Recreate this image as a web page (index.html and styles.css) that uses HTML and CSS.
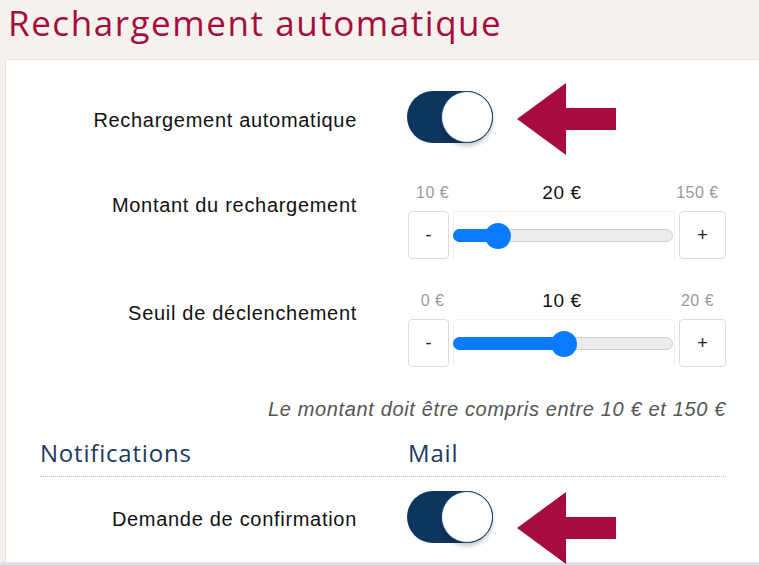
FILE: index.html
```html
<!DOCTYPE html>
<html lang="fr">
<head>
<meta charset="utf-8">
<title>Rechargement automatique</title>
<link rel="stylesheet" href="styles.css">
</head>
<body>
<h1 class="page-title">Rechargement automatique</h1>
<section class="card">
  <div class="row row-toggle">
    <div class="label">Rechargement automatique</div>
    <div class="control">
      <div class="toggle"><span class="knob"></span></div>
      <svg class="arrow" width="100" height="72" viewBox="0 0 100 72" aria-hidden="true"><polygon points="0,36 49,0 49,25 99,25 99,47 49,47 49,72" /></svg>
    </div>
  </div>

  <div class="row row-slider">
    <div class="label label-slider">Montant du rechargement</div>
    <div class="slider">
      <div class="bounds"><span>10 €</span><span class="value">20 €</span><span>150 €</span></div>
      <div class="slider-controls">
        <button class="step">-</button>
        <div class="range"><div class="track"><div class="fill" style="width:44px"></div><div class="thumb" style="left:44px"></div></div></div>
        <button class="step">+</button>
      </div>
    </div>
  </div>

  <div class="row row-slider row-slider-2">
    <div class="label label-slider">Seuil de déclenchement</div>
    <div class="slider">
      <div class="bounds"><span>0 €</span><span class="value">10 €</span><span>20 €</span></div>
      <div class="slider-controls">
        <button class="step">-</button>
        <div class="range"><div class="track"><div class="fill" style="width:110px"></div><div class="thumb" style="left:110px"></div></div></div>
        <button class="step">+</button>
      </div>
    </div>
  </div>

  <p class="note">Le montant doit être compris entre 10 € et 150 €</p>

  <div class="row notif-head">
    <div class="head-title">Notifications</div>
    <div class="head-title">Mail</div>
  </div>

  <div class="row row-toggle row-last">
    <div class="label">Demande de confirmation</div>
    <div class="control">
      <div class="toggle"><span class="knob"></span></div>
      <svg class="arrow arrow-low" width="100" height="72" viewBox="0 0 100 72" aria-hidden="true"><polygon points="0,36 49,0 49,25 99,25 99,47 49,47 49,72" /></svg>
    </div>
  </div>
</section>
<div class="bottom-band"></div>
</body>
</html>
```

FILE: styles.css
```css
* { box-sizing: border-box; }

html, body {
  margin: 0;
  padding: 0;
  overflow: hidden;
}

body {
  background: #f5f2ed;
  font-family: "Liberation Sans", Arial, sans-serif;
  color: #111;
  width: 759px;
  height: 565px;
}

.page-title {
  margin: 0;
  height: 59px;
  padding: 0 0 0 8px;
  font-family: "Open Sans", Lato, sans-serif;
  font-weight: 400;
  font-size: 35px;
  line-height: 46px;
  color: #a60d3e;
  letter-spacing: 1.55px;
  white-space: nowrap;
}

.card {
  margin-left: 5px;
  width: 760px;
  height: 503px;
  background: #fff;
  border-top: 1px solid #e8e6e2;
  border-left: 1px solid #e6e4e0;
  padding: 31px 0 0 34px;
}

.row {
  display: grid;
  grid-template-columns: 317px 318px;
  column-gap: 51px;
}

.label {
  text-align: right;
  font-size: 20px;
  line-height: 24px;
  letter-spacing: 0.7px;
  color: #111;
}

.row-toggle { align-items: center; }
.row-toggle .label { padding-top: 5px; }

.control {
  display: flex;
  align-items: center;
  margin-left: -1px;
}

.toggle {
  width: 86px;
  height: 52px;
  border-radius: 26px;
  background: #0d365f;
  display: flex;
  justify-content: flex-end;
}

.knob {
  width: 52px;
  height: 52px;
  border-radius: 50%;
  background: #fff;
  border: 1px solid #1b4670;
  box-shadow: 0 3px 4px rgba(0, 0, 0, 0.22);
}

.arrow {
  margin: -8px 0 -12px 24px;
  fill: #a80c3e;
}

.arrow-low { margin: 1px 0 -21px 24px; }

.row-slider { margin-top: 40px; }
.row-slider-2 { margin-top: 32px; }

.label-slider { padding-top: 10px; }

.bounds,
.slider-controls {
  display: grid;
  grid-template-columns: 41px 1fr 47px;
  column-gap: 4px;
}

.bounds {
  height: 20px;
  line-height: 20px;
  margin-bottom: 8px;
  text-align: center;
  font-size: 16px;
  letter-spacing: 0.5px;
  color: #9a9a9a;
}

.bounds span:first-child { margin-left: 8px; white-space: nowrap; }
.bounds span:last-child { margin-left: -10px; white-space: nowrap; }

.bounds .value {
  font-size: 19px;
  color: #111;
  letter-spacing: 0.6px;
  margin-left: -4px;
}

.step {
  height: 48px;
  margin: 0;
  padding: 0;
  background: #fff;
  border: 1px solid #dcdcdc;
  border-radius: 4px;
  font-family: "Liberation Sans", Arial, sans-serif;
  font-size: 18px;
  color: #222;
}

.range {
  height: 48px;
  border: 1px solid #f1f1f1;
  border-bottom: none;
  border-radius: 4px 4px 0 0;
  display: flex;
  align-items: center;
}

.track {
  position: relative;
  width: 100%;
  height: 13px;
  margin: 0 -1px;
  background: #ececec;
  border: 1px solid #cfcfcf;
  border-radius: 7px;
}

.fill {
  height: 13px;
  margin: -1px 0 0 -1px;
  background: #0a7bff;
  border-radius: 7px 0 0 7px;
}

.thumb {
  position: absolute;
  top: 50%;
  width: 26px;
  height: 26px;
  margin: -13px 0 0 -13px;
  border-radius: 50%;
  background: #0a7bff;
}

.note {
  margin: 30px 0 0;
  width: 686px;
  text-align: right;
  font-style: italic;
  font-size: 20px;
  line-height: 24px;
  letter-spacing: 0.65px;
  color: #555;
}

.notif-head {
  margin-top: 17px;
  width: 686px;
  padding-bottom: 8px;
  border-bottom: 1px dotted #bdbdbd;
}

.head-title {
  font-family: "Open Sans", Lato, sans-serif;
  font-size: 24px;
  line-height: 30px;
  color: #1c3a5e;
  letter-spacing: 0.8px;
}

.row-last { margin-top: 14px; }
.row-last .label { padding-top: 3px; }

.bottom-band {
  height: 3px;
  background: #e1e0e6;
}
```
